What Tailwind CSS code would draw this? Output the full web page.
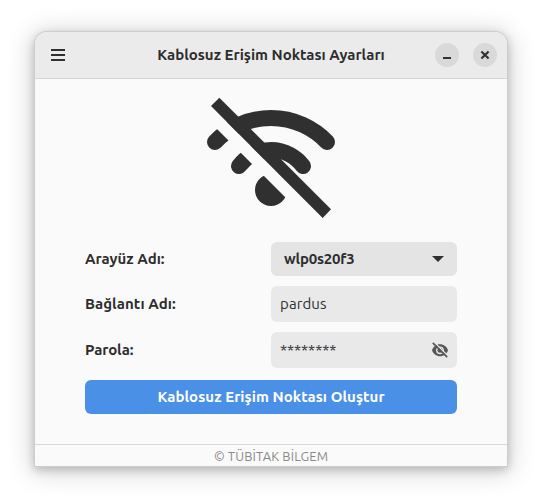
<!DOCTYPE html>
<html lang="tr">
<head>
<meta charset="utf-8">
<title>Kablosuz Erişim Noktası Ayarları</title>
<script src="https://cdn.jsdelivr.net/npm/@tailwindcss/browser@4"></script>
</head>
<body class="h-[504px] w-[542px] overflow-hidden bg-white px-[35px] pt-8 font-['Ubuntu','Noto_Sans',sans-serif] text-[15px] text-[#2d2d2d]">
<main class="flex h-[434px] flex-col rounded-t-[12px] bg-[#fafafa] shadow-[0_0_0_1px_#cdcdcd,0_3px_10px_1px_rgba(0,0,0,0.20),0_3px_26px_4px_rgba(0,0,0,0.16)]">
  <header class="grid h-[47px] shrink-0 grid-cols-[72px_1fr_72px] items-center rounded-t-[12px] border-b border-[#d6d6d6] bg-[#ebebeb]">
    <button class="pl-4" aria-label="Menü">
      <svg class="block" width="14" height="12" viewBox="0 0 14 12" fill="#303030"><path d="M0 0h14v2H0zM0 5h14v2H0zM0 10h14v2H0z"/></svg>
    </button>
    <h1 class="text-center whitespace-nowrap font-bold">Kablosuz Erişim Noktası Ayarları</h1>
    <div class="flex gap-[14px]">
      <button class="size-6 shrink-0 rounded-full bg-[#d9d9d9]" aria-label="Küçült"><svg class="block" width="24" height="24"><path d="M8 14h8v2H8z" fill="#303030"/></svg></button>
      <button class="size-6 shrink-0 rounded-full bg-[#d9d9d9]" aria-label="Kapat"><svg class="block" width="24" height="24"><path d="M8.4 8.4l7.2 7.2M15.6 8.4l-7.2 7.2" stroke="#303030" stroke-width="2.1"/></svg></button>
    </div>
  </header>
  <section class="flex grow flex-col px-[50px] pt-[11px]">
    <svg class="ml-[110px] block shrink-0" width="150" height="135" viewBox="0 0 450 405">
      <defs><clipPath id="parts"><path d="M0 0H450V405H405L0 0ZM0 51L354 405H0Z"/></clipPath></defs>
      <g clip-path="url(#parts)" fill="none" stroke="#303030" stroke-width="48" stroke-linecap="round">
        <path d="M60 156A232 232 0 0 1 396 156"/>
        <path d="M132 228A120 120 0 0 1 324 228"/>
        <circle cx="228" cy="300" r="48" fill="#303030" stroke="none"/>
      </g>
      <path d="M48 48L73 23L408 358L383 384Z" fill="#303030"/>
    </svg>
    <form class="mt-[17px] grid grid-cols-2 items-center gap-y-[10px]">
      <span class="font-bold">Arayüz Adı:</span>
      <div class="flex h-[34px] items-center justify-between rounded-md bg-[#e4e4e4] pr-[13px] pl-[13px] font-bold">
        <span class="tracking-[-0.2px]">wlp0s20f3</span>
        <svg width="12" height="6"><path d="M0 0h12L6 6z" fill="#303030"/></svg>
      </div>
      <span class="font-bold tracking-[0.05px]">Bağlantı Adı:</span>
      <div class="flex h-9 items-center rounded-md bg-[#e9e9e9] px-[9px] text-[#303030]"><span class="tracking-[0.1px]">pardus</span></div>
      <span class="font-bold tracking-[-0.1px]">Parola:</span>
      <div class="flex h-9 items-center justify-between rounded-md bg-[#e9e9e9] pr-[9px] pl-[9px] text-[#303030]">
        <span class="tracking-[-0.1px]">********</span>
        <svg width="16" height="16" viewBox="0 0 16 16" fill="none">
          <path d="M0 8.3C1.2 4.7 4.2 2.3 8 2.3s6.8 2.4 8 6c-1.2 3.6-4.2 6-8 6s-6.8-2.4-8-6z" fill="#575757"/>
          <circle cx="8" cy="8.3" r="3.9" fill="#e9e9e9"/><circle cx="8" cy="8.3" r="2.5" fill="#575757"/>
          <path d="M2.2 0.2L16.5 14.5" stroke="#e9e9e9" stroke-width="1.3"/>
          <path d="M0.8 0.8L15.2 15.2" stroke="#575757" stroke-width="1.7"/>
        </svg>
      </div>
    </form>
    <button class="mt-3 h-[34px] rounded-md bg-[#4a90e6] font-bold tracking-[0.05px] text-white"><span>Kablosuz Erişim Noktası Oluştur</span></button>
  </section>
  <footer class="flex h-[22px] shrink-0 items-center justify-center border-t border-[#d9d9d9] pt-px text-[13px] leading-5 tracking-[0.12px] text-[#8a8a8a]"><span>© TÜBİTAK BİLGEM</span></footer>
</main>
</body>
</html>
